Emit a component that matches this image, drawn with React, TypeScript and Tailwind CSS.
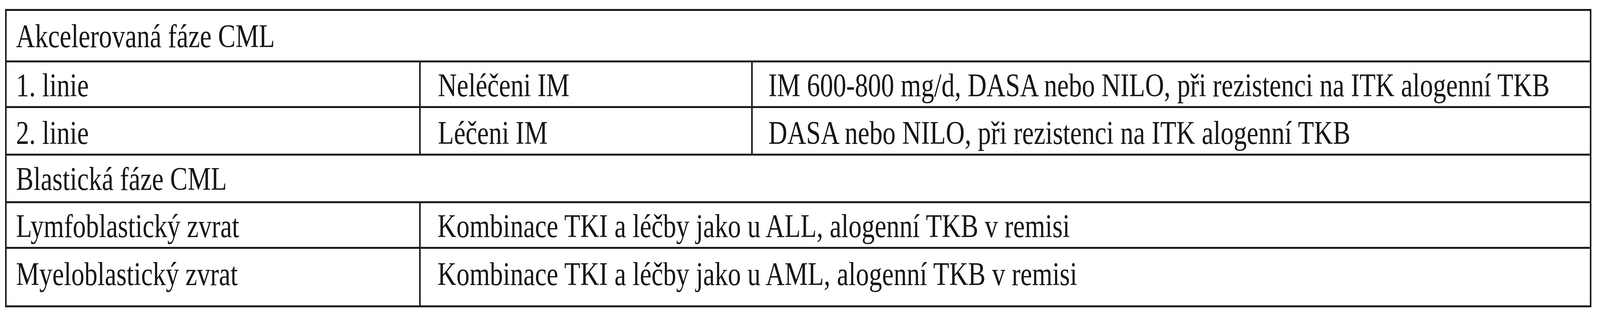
// the reference is 5194px wide; squeeze text horizontally to whatever width the window really has
const K = typeof window !== "undefined" ? window.innerWidth / 5194 : 1

const rows = [
  { cells: ["Akcelerovaná fáze CML"], h: "h-[127px]", pt: "pt-[17px]" },
  { cells: ["1. linie", "Neléčeni IM", "IM 600-800 mg/d, DASA nebo NILO, při rezistenci na ITK alogenní TKB"], h: "h-[117px]", pt: "pt-[11px]" },
  { cells: ["2. linie", "Léčeni IM", "DASA nebo NILO, při rezistenci na ITK alogenní TKB"], h: "h-[122px]", pt: "pt-[16px]" },
  { cells: ["Blastická fáze CML"], h: "h-[122px]", pt: "pt-[12px]" },
  { cells: ["Lymfoblastický zvrat", "Kombinace TKI a léčby jako u ALL, alogenní TKB v remisi"], h: "h-[117px]", pt: "pt-[11px]" },
  { cells: ["Myeloblastický zvrat", "Kombinace TKI a léčby jako u AML, alogenní TKB v remisi"], h: "h-[150px]", pt: "pt-[17px]" },
]

function T({ children }: { children: string }) {
  return (
    <span className="inline-block origin-left" style={{ transform: `scaleX(${K})` }}>
      {children}
    </span>
  )
}

function Row({ cells, h, pt, first }: { cells: string[]; h: string; pt: string; first: boolean }) {
  const border = first ? "" : "border-t-[5px] border-[#1c1c1c]"
  if (cells.length === 1) {
    return (
      <div className={`flex ${h} ${border}`}>
        <div className={`flex-1 overflow-hidden pl-[0.584%] ${pt}`}>
          <T>{cells[0]}</T>
        </div>
      </div>
    )
  }
  return (
    <div className={`flex ${h} ${border}`}>
      <div className={`w-[26.06%] shrink-0 overflow-hidden pl-[0.584%] ${pt}`}>
        <T>{cells[0]}</T>
      </div>
      {cells.length === 3 ? (
        <>
          <div className={`w-[20.96%] shrink-0 overflow-hidden border-l-4 border-[#1c1c1c] pl-[1.07%] ${pt}`}>
            <T>{cells[1]}</T>
          </div>
          <div className={`min-w-0 flex-1 overflow-hidden border-l-4 border-[#1c1c1c] pl-[0.99%] ${pt}`}>
            <T>{cells[2]}</T>
          </div>
        </>
      ) : (
        <div className={`min-w-0 flex-1 overflow-hidden border-l-4 border-[#1c1c1c] pl-[1.05%] ${pt}`}>
          <T>{cells[1]}</T>
        </div>
      )}
    </div>
  )
}

export default function App() {
  return (
    <div className="h-[800px] w-full overflow-hidden bg-white pt-[23px]">
      <div
        className="ml-[0.327%] flex w-[99.134%] flex-col border-x-4 border-y-[5px] border-[#1c1c1c] text-[85px] leading-[94px] text-[#151515] whitespace-nowrap"
        style={{ fontFamily: '"Liberation Serif", "Times New Roman", serif' }}
      >
        {rows.map((r, i) => (
          <Row key={i} cells={r.cells} h={r.h} pt={r.pt} first={i === 0} />
        ))}
      </div>
    </div>
  )
}
